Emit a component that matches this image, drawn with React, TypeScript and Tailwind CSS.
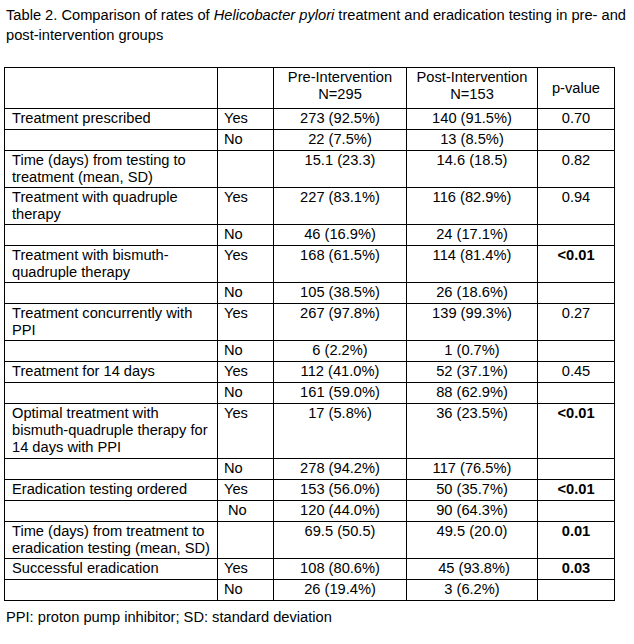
type Row = {
  label?: React.ReactNode;
  sub?: string;
  pre: string;
  post: string;
  p?: string;
  bold?: boolean;
  subIndent?: boolean;
  double?: boolean;
};

const rows: Row[] = [
  { label: "Treatment prescribed", sub: "Yes", pre: "273 (92.5%)", post: "140 (91.5%)", p: "0.70" },
  { sub: "No", pre: "22 (7.5%)", post: "13 (8.5%)" },
  {
    label: (
      <>
        Time (days) from testing to
        <br />
        treatment (mean, SD)
      </>
    ),
    pre: "15.1 (23.3)",
    post: "14.6 (18.5)",
    p: "0.82",
    double: true,
  },
  {
    label: (
      <>
        Treatment with quadruple
        <br />
        therapy
      </>
    ),
    sub: "Yes",
    pre: "227 (83.1%)",
    post: "116 (82.9%)",
    p: "0.94",
    double: true,
  },
  { sub: "No", pre: "46 (16.9%)", post: "24 (17.1%)" },
  {
    label: (
      <>
        Treatment with bismuth-
        <br />
        quadruple therapy
      </>
    ),
    sub: "Yes",
    pre: "168 (61.5%)",
    post: "114 (81.4%)",
    p: "<0.01",
    bold: true,
    double: true,
  },
  { sub: "No", pre: "105 (38.5%)", post: "26 (18.6%)" },
  {
    label: (
      <>
        Treatment concurrently with
        <br />
        PPI
      </>
    ),
    sub: "Yes",
    pre: "267 (97.8%)",
    post: "139 (99.3%)",
    p: "0.27",
    double: true,
  },
  { sub: "No", pre: "6 (2.2%)", post: "1 (0.7%)" },
  { label: "Treatment for 14 days", sub: "Yes", pre: "112 (41.0%)", post: "52 (37.1%)", p: "0.45" },
  { sub: "No", pre: "161 (59.0%)", post: "88 (62.9%)" },
  {
    label: (
      <>
        Optimal treatment with
        <br />
        bismuth-quadruple therapy for
        <br />
        14 days with PPI
      </>
    ),
    sub: "Yes",
    pre: "17 (5.8%)",
    post: "36 (23.5%)",
    p: "<0.01",
    bold: true,
  },
  { sub: "No", pre: "278 (94.2%)", post: "117 (76.5%)" },
  { label: "Eradication testing ordered", sub: "Yes", pre: "153 (56.0%)", post: "50 (35.7%)", p: "<0.01", bold: true },
  { sub: "No", pre: "120 (44.0%)", post: "90 (64.3%)", subIndent: true },
  {
    label: (
      <>
        Time (days) from treatment to
        <br />
        eradication testing (mean, SD)
      </>
    ),
    pre: "69.5 (50.5)",
    post: "49.5 (20.0)",
    p: "0.01",
    bold: true,
    double: true,
  },
  { label: "Successful eradication", sub: "Yes", pre: "108 (80.6%)", post: "\u00a045 (93.8%)", p: "0.03", bold: true },
  { sub: "No", pre: "26 (19.4%)", post: "3 (6.2%)" },
];

export default function App() {
  return (
    <div className="w-[634px] h-[644px] bg-white text-black font-['Liberation_Sans',Arial,sans-serif] text-[14.67px]">
      {/* caption */}
      <p className="pt-[6px] pl-[6px] leading-[19.5px]">
        Table 2. Comparison of rates of <i>Helicobacter pylori</i> treatment and eradication testing in pre- and
        <br />
        post-intervention groups
      </p>

      <table className="mt-[22px] ml-[4px] w-[610px] border-collapse table-fixed">
        <colgroup>
          <col className="w-[213px]" />
          <col className="w-[56px]" />
          <col className="w-[133px]" />
          <col className="w-[131px]" />
          <col className="w-[77px]" />
        </colgroup>
        <thead>
          <tr>
            <th className="border border-black font-normal" />
            <th className="border border-black font-normal" />
            <th className="border border-black font-normal text-center align-top pt-[1px] pb-[5px] leading-[17px]">
              Pre-Intervention
              <br />
              N=295
            </th>
            <th className="border border-black font-normal text-center align-top pt-[1px] pb-[5px] leading-[17px]">
              Post-Intervention
              <br />
              N=153
            </th>
            <th className="border border-black font-normal text-center align-middle leading-[17px]">p-value</th>
          </tr>
        </thead>
        <tbody>
          {rows.map((r, i) => {
            const cell = `border border-black align-top pt-[1px] leading-[17px] ${r.double ? "pb-[1px]" : "pb-[2px]"}`;
            return (
              <tr key={i}>
                <td className={`${cell} pl-[7px] pr-[4px]`}>{r.label}</td>
                <td className={`${cell} ${r.subIndent ? "pl-[10px]" : "pl-[6px]"}`}>{r.sub}</td>
                <td className={`${cell} text-center`}>{r.pre}</td>
                <td className={`${cell} text-center`}>{r.post}</td>
                <td className={`${cell} text-center ${r.bold ? "font-bold" : ""}`}>{r.p}</td>
              </tr>
            );
          })}
        </tbody>
      </table>

      <p className="mt-[7px] pl-[6px] leading-[19.5px]">PPI: proton pump inhibitor; SD: standard deviation</p>
    </div>
  );
}
